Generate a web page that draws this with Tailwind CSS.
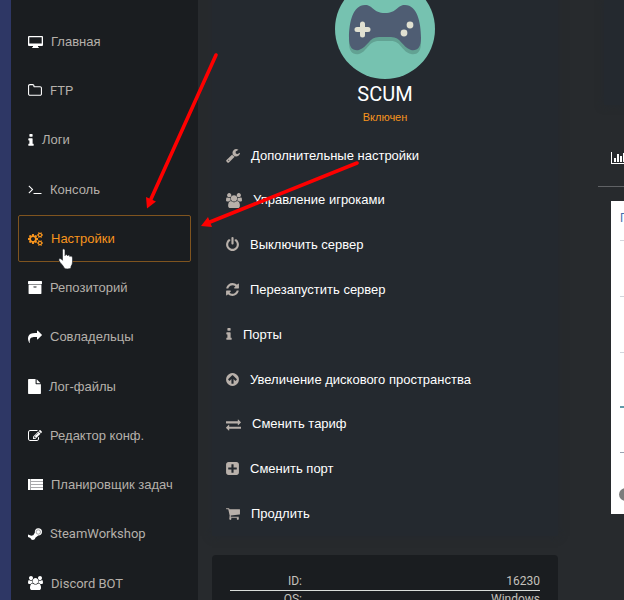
<!DOCTYPE html>
<html lang="ru">
<head>
    <meta charset="UTF-8">
    <meta name="viewport" content="width=device-width, initial-scale=1.0">
    <title>SCUM - Панель управления</title>
    <script src="https://cdn.jsdelivr.net/npm/@tailwindcss/browser@4"></script>
</head>
<body class="relative flex h-screen overflow-hidden bg-[#272a2d] font-['Liberation_Sans',Arial,sans-serif] text-[13px] text-white">

    <div class="w-[11px] shrink-0 bg-[#2e3765]"></div>

    <!-- Боковое меню -->
    <nav class="flex min-h-[608px] w-[187px] shrink-0 flex-col self-start bg-[#1a1d20] pt-[17px] pr-[7px] pl-[7px] text-[#b5b0aa]">
        <a href="#" class="my-px flex flex-1 items-center gap-2 border border-transparent pl-[9px]">
            <svg class="h-[14px] w-[15px] fill-white" viewBox="0 0 15 14"><path fill-rule="evenodd" d="M1 1h13q1 0 1 1v8q0 1-1 1h-4v1q1 0 1 1h-7q0-1 1-1v-1h-4q-1 0-1-1v-8q0-1 1-1zM1.300 2.300v6.200h12.400v-6.200z"/></svg>
            Главная
        </a>
        <a href="#" class="my-px flex flex-1 items-center gap-2 border border-transparent pl-[9px] font-['Roboto',sans-serif]">
            <svg class="h-[15px] w-[14px] fill-white" viewBox="64 0 1664 1792"><path d="M1600 1312v-704q0-40-28-68t-68-28h-704q-40 0-68-28t-28-68v-64q0-40-28-68t-68-28h-320q-40 0-68 28t-28 68v960q0 40 28 68t68 28h1216q40 0 68-28t28-68zm128-704v704q0 92-66 158t-158 66h-1216q-92 0-158-66t-66-158v-960q0-92 66-158t158-66h320q92 0 158 66t66 158v32h672q92 0 158 66t66 158z"/></svg>
            FTP
        </a>
        <a href="#" class="my-px flex flex-1 items-center gap-2 border border-transparent pl-[9px]">
            <svg class="h-[15px] w-[6px] fill-white" viewBox="576 0 640 1792"><path d="M1216 1344v128q0 26-19 45t-45 19h-512q-26 0-45-19t-19-45v-128q0-26 19-45t45-19h64v-384h-64q-26 0-45-19t-19-45v-128q0-26 19-45t45-19h384q26 0 45 19t19 45v576h64q26 0 45 19t19 45zm-128-1152v192q0 26-19 45t-45 19h-256q-26 0-45-19t-19-45v-192q0-26 19-45t45-19h256q26 0 45 19t19 45z"/></svg>
            Логи
        </a>
        <a href="#" class="my-px flex flex-1 items-center gap-2 border border-transparent pl-[9px]">
            <svg class="h-[14px] w-[14px] fill-white" viewBox="64 0 1664 1792"><path d="M649 983l-466 466q-10 10-23 10t-23-10l-50-50q-10-10-10-23t10-23l393-393-393-393q-10-10-10-23t10-23l50-50q10-10 23-10t23 10l466 466q10 10 10 23t-10 23zm1079 457v64q0 14-9 23t-23 9h-960q-14 0-23-9t-9-23v-64q0-14 9-23t23-9h960q14 0 23 9t9 23z"/></svg>
            Консоль
        </a>
        <a href="#" class="my-px flex flex-1 items-center gap-2 rounded-xs border border-[#7f541f] pl-[9px] text-[#f7941d]">
            <svg class="h-[14px] w-[15px] fill-[#f7941d]" viewBox="-64 0 1920 1792"><path d="M832 896q0-106-75-181t-181-75-181 75-75 181 75 181 181 75 181-75 75-181zm768 512q0-52-38-90t-90-38-90 38-38 90q0 53 37.500 90.500t90.500 37.500 90.500-37.500 37.500-90.500zm0-1024q0-52-38-90t-90-38-90 38-38 90q0 53 37.500 90.500t90.500 37.500 90.500-37.500 37.500-90.500zm-384 421v185q0 10-7 19.500t-16 10.500l-155 24q-11 35-32 76 34 48 90 115 7 11 7 20 0 12-7 19-23 30-82.500 89.500t-78.500 59.500q-11 0-21-7l-115-90q-37 19-77 31-11 108-23 155-7 24-30 24h-186q-11 0-20-7.500t-10-17.500l-23-153q-34-10-75-31l-118 89q-7 7-20 7-11 0-21-8-144-133-144-160 0-9 7-19 10-14 41-53t47-61q-23-44-35-82l-152-24q-10-1-17-9.500t-7-19.500v-185q0-10 7-19.500t16-10.500l155-24q11-35 32-76-34-48-90-115-7-11-7-20 0-12 7-20 22-30 82-89t79-59q11 0 21 7l115 90q34-18 77-32 11-108 23-154 7-24 30-24h186q11 0 20 7.500t10 17.500l23 153q34 10 75 31l118-89q8-7 20-7 11 0 21 8 144 133 144 160 0 8-7 19-12 16-42 54t-45 60q23 48 34 82l152 23q10 2 17 10.500t7 19.500zm640 533v140q0 16-149 31-12 27-30 52 51 113 51 138 0 4-4 7-122 71-124 71-8 0-46-47t-52-68q-20 2-30 2t-30-2q-14 21-52 68t-46 47q-2 0-124-71-4-3-4-7 0-25 51-138-18-25-30-52-149-15-149-31v-140q0-16 149-31 13-29 30-52-51-113-51-138 0-4 4-7 4-2 35-20t59-34 30-16q8 0 46 46.500t52 67.500q20-2 30-2t30 2q51-71 92-112l6-2q4 0 124 70 4 3 4 7 0 25-51 138 17 23 30 52 149 15 149 31zm0-1024v140q0 16-149 31-12 27-30 52 51 113 51 138 0 4-4 7-122 71-124 71-8 0-46-47t-52-68q-20 2-30 2t-30-2q-14 21-52 68t-46 47q-2 0-124-71-4-3-4-7 0-25 51-138-18-25-30-52-149-15-149-31v-140q0-16 149-31 13-29 30-52-51-113-51-138 0-4 4-7 4-2 35-20t59-34 30-16q8 0 46 46.500t52 67.500q20-2 30-2t30 2q51-71 92-112l6-2q4 0 124 70 4 3 4 7 0 25-51 138 17 23 30 52 149 15 149 31z"/></svg>
            Настройки
        </a>
        <a href="#" class="my-px flex flex-1 items-center gap-2 border border-transparent pl-[9px]">
            <svg class="h-[15px] w-[14px] fill-white" viewBox="64 0 1664 1792"><path d="M1088 832q0-26-19-45t-45-19h-256q-26 0-45 19t-19 45 19 45 45 19h256q26 0 45-19t19-45zm576-192v960q0 26-19 45t-45 19h-1408q-26 0-45-19t-19-45v-960q0-26 19-45t45-19h1408q26 0 45 19t19 45zm64-448v256q0 26-19 45t-45 19h-1536q-26 0-45-19t-19-45v-256q0-26 19-45t45-19h1536q26 0 45 19t19 45z"/></svg>
            Репозиторий
        </a>
        <a href="#" class="my-px flex flex-1 items-center gap-2 border border-transparent pl-[9px]">
            <svg class="h-[14px] w-[14px] fill-white" viewBox="0 0 1792 1792"><path d="M1792 640q0 26-19 45l-512 512q-19 19-45 19t-45-19-19-45v-256h-224q-98 0-175.500 6t-154 21.500-133 42.500-105.500 69.500-80 101-48.500 138.500-17.500 181q0 55 5 123 0 6 2.500 23.500t2.500 26.500q0 15-8.500 25t-23.500 10q-16 0-28-17-7-9-13-22t-13.500-30-10.500-24q-127-285-127-451 0-199 53-333 162-403 875-403h224v-256q0-26 19-45t45-19 45 19l512 512q19 19 19 45z"/></svg>
            Совладельцы
        </a>
        <a href="#" class="my-px flex flex-1 items-center gap-2 border border-transparent pl-[9px]">
            <svg class="h-[15px] w-[13px] fill-white" viewBox="128 0 1536 1792"><path d="M1152 512v-472q22 14 36 28l408 408q14 14 28 36h-472zm-128 32q0 40 28 68t68 28h544v1056q0 40-28 68t-68 28h-1344q-40 0-68-28t-28-68v-1600q0-40 28-68t68-28h800v544z"/></svg>
            Лог-файлы
        </a>
        <a href="#" class="my-px flex flex-1 items-center gap-2 border border-transparent pl-[9px]">
            <svg class="h-[14px] w-[14px] fill-white" viewBox="0 0 1792 1792"><path d="M888 1184l116-116-152-152-116 116v56h96v96h56zm440-720q-16-16-33 1l-350 350q-17 17-1 33t33-1l350-350q17-17 1-33zm80 594v190q0 119-84.500 203.500t-203.500 84.500h-832q-119 0-203.500-84.500t-84.500-203.500v-832q0-119 84.500-203.500t203.500-84.500h832q63 0 117 25 15 7 18 23 3 17-9 29l-49 49q-14 14-32 8-23-6-45-6h-832q-66 0-113 47t-47 113v832q0 66 47 113t113 47h832q66 0 113-47t47-113v-126q0-13 9-22l64-64q15-15 35-7t20 29zm-96-738l288 288-672 672h-288v-288zm444 132l-92 92-288-288 92-92q28-28 68-28t68 28l152 152q28 28 28 68t-28 68z"/></svg>
            Редактор конф.
        </a>
        <a href="#" class="my-px flex flex-1 items-center gap-2 border border-transparent pl-[9px]">
            <svg class="h-[14px] w-[15px]" viewBox="0 0 15 14"><path fill="#a9a9ac" d="M0 1h15v11h-15z"/><path fill="#fff" d="M0 1h2v11h-2zM3 1h12v2h-12zM3 4h12v2h-12zM3 7h12v2h-12zM3 10h12v2h-12z"/></svg>
            Планировщик задач
        </a>
        <a href="#" class="my-px flex flex-1 items-center gap-2 border border-transparent pl-[9px] font-['Roboto',sans-serif]">
            <svg class="h-[14px] w-[14px]" viewBox="0 0 14 14"><path fill="#fff" d="M0 7.500l3.300 1.200q1-.6 2-.5l1.500-2.400q-.2-4.300 3.500-4.500 3.700.1 3.700 3.700-.2 3.400-3.700 3.600l-2.700 2q-.5 2.300-2.600 2.400-2-.1-2.600-1.900l-2.400-1z"/><circle cx="10.300" cy="5" r="2.200" fill="none" stroke="#8b8d8f" stroke-width=".8"/></svg>
            SteamWorkshop
        </a>
        <a href="#" class="my-px flex flex-1 items-center gap-2 border border-transparent pl-[9px] font-['Roboto',sans-serif]">
            <svg class="h-[14px] w-[15px] fill-white" viewBox="-64 0 1920 1792"><path d="M529 896q-162 5-265 128h-134q-82 0-138-40.500t-56-118.500q0-353 124-353 6 0 43.500 21t97.500 42.500 119 21.500q67 0 133-23-5 37-5 66 0 139 81 256zm1071 637q0 120-73 189.500t-194 69.500h-874q-121 0-194-69.500t-73-189.500q0-53 3.500-103.500t14-109 26.500-108.500 43-97.500 62-81 85.500-53.500 111.500-20q10 0 43 21.500t73 48 107 48 135 21.500 135-21.500 107-48 73-48 43-21.500q61 0 111.500 20t85.500 53.500 62 81 43 97.500 26.500 108.500 14 109 3.500 103.500zm-1024-1277q0 106-75 181t-181 75-181-75-75-181 75-181 181-75 181 75 75 181zm704 384q0 159-112.500 271.500t-271.500 112.500-271.500-112.500-112.500-271.500 112.500-271.500 271.500-112.500 271.500 112.500 112.500 271.500zm576 225q0 78-56 118.500t-138 40.500h-134q-103-123-265-128 81-117 81-256 0-29-5-66 66 23 133 23 59 0 119-21.500t97.500-42.500 43.500-21q124 0 124 353zm-128-609q0 106-75 181t-181 75-181-75-75-181 75-181 181-75 181 75 75 181z"/></svg>
            Discord BOT
        </a>
    </nav>

    <main class="flex min-w-0 flex-1 items-start gap-10 pl-[14px]">
        <!-- Сервер -->
        <div class="w-[346px] shrink-0">
            <section class="bg-[#24292f] px-[14px] shadow-[0_0_8px_#24292f]">
                <svg class="mx-auto -mt-[21px] h-[100px] w-[100px]" viewBox="0 0 100 100">
                    <circle cx="50" cy="50" r="50" fill="#76c2b0"/>
                    <path fill="#62a293" d="M14 64C14 48 18 30 28 30C37 30 36 39 49 39C63 39 61 30 71 30C81 30 86 48 86 64C86 74 81 76 76 75C67 73 66 62 56 62H44C33 62 32 73 24 75C18 76 14 73 14 64Z"/>
                    <path fill="#4f5d73" d="M14 59C14 43 18 26 30 26C38 26 38 34 50 34C62 34 62 26 70 26C82 26 86 43 86 59C86 69 82 72 76 71C67 68 66 58 56 58H44C34 58 33 68 24 71C18 72 14 69 14 59Z"/>
                    <path stroke="#e0e0d1" stroke-width="5" stroke-linecap="round" d="M22 50.500h11M27.500 45v11"/>
                    <circle cx="75" cy="46" r="3.400" fill="#e0e0d1"/>
                    <circle cx="69" cy="54" r="3.400" fill="#e0e0d1"/>
                </svg>
                <h1 class="mt-[3px] text-center font-['Roboto',sans-serif] text-xl leading-6">SCUM</h1>
                <p class="mt-[3px] text-center text-[11px] leading-4 text-[#f7941d]">Включен</p>
                <ul class="mt-2 grid h-[403px] auto-rows-fr">
                    <li class="flex"><a href="#" class="flex items-center gap-[11px]">
                        <svg class="h-[15px] w-[14px] fill-[#b8b0aa]" viewBox="64 0 1664 1792"><path d="M448 1472q0-26-19-45t-45-19-45 19-19 45 19 45 45 19 45-19 19-45zm644-420l-682 682q-37 37-90 37-52 0-91-37l-106-108q-38-36-38-90 0-53 38-91l681-681q39 98 114.500 173.500t173.500 114.500zm634-435q0 39-23 106-47 134-164.500 217.500t-258.500 83.500q-185 0-316.500-131.500t-131.500-316.500 131.500-316.500 316.500-131.500q58 0 121.500 16.500t107.500 46.500q16 11 16 28t-16 28l-293 169v224l193 107q5-3 79-48.500t135.500-81 70.500-35.500q15 0 23.500 10t8.500 25z"/></svg>
                        Дополнительные настройки
                    </a></li>
                    <li class="flex"><a href="#" class="flex items-center gap-[11px]">
                        <svg class="h-[15px] w-[16px] fill-[#b8b0aa]" viewBox="-64 0 1920 1792"><path d="M529 896q-162 5-265 128h-134q-82 0-138-40.500t-56-118.500q0-353 124-353 6 0 43.500 21t97.500 42.500 119 21.500q67 0 133-23-5 37-5 66 0 139 81 256zm1071 637q0 120-73 189.500t-194 69.500h-874q-121 0-194-69.500t-73-189.500q0-53 3.500-103.500t14-109 26.500-108.500 43-97.500 62-81 85.500-53.500 111.500-20q10 0 43 21.500t73 48 107 48 135 21.500 135-21.500 107-48 73-48 43-21.500q61 0 111.500 20t85.500 53.500 62 81 43 97.500 26.500 108.500 14 109 3.500 103.500zm-1024-1277q0 106-75 181t-181 75-181-75-75-181 75-181 181-75 181 75 75 181zm704 384q0 159-112.500 271.500t-271.500 112.500-271.500-112.500-112.500-271.500 112.500-271.500 271.500-112.500 271.500 112.500 112.500 271.500zm576 225q0 78-56 118.500t-138 40.500h-134q-103-123-265-128 81-117 81-256 0-29-5-66 66 23 133 23 59 0 119-21.500t97.500-42.500 43.500-21q124 0 124 353zm-128-609q0 106-75 181t-181 75-181-75-75-181 75-181 181-75 181 75 75 181z"/></svg>
                        Управление игроками
                    </a></li>
                    <li class="flex"><a href="#" class="flex items-center gap-[11px]">
                        <svg class="h-[15px] w-[13px] fill-[#b8b0aa]" viewBox="128 0 1536 1792"><path d="M1664 896q0 156-61 298t-164 245-245 164-298 61-298-61-245-164-164-245-61-298q0-182 80.500-343t226.500-270q43-32 95.500-25t83.500 50q32 42 24.500 94.500t-49.500 84.500q-98 74-151.500 181t-53.500 228q0 104 40.500 198.500t109.500 163.500 163.500 109.500 198.500 40.500 198.500-40.500 163.500-109.500 109.500-163.500 40.500-198.500q0-121-53.500-228t-151.500-181q-42-32-49.500-84.500t24.500-94.500q31-43 84-50t95 25q146 109 226.500 270t80.500 343zm-640-768v640q0 52-38 90t-90 38-90-38-38-90v-640q0-52 38-90t90-38 90 38 38 90z"/></svg>
                        Выключить сервер
                    </a></li>
                    <li class="flex"><a href="#" class="flex items-center gap-[11px]">
                        <svg class="h-[15px] w-[13px] fill-[#b8b0aa]" viewBox="128 0 1536 1792"><path d="M1639 1056q0 5-1 7-64 268-268 434.500t-478 166.500q-146 0-282.500-55t-243.500-157l-129 129q-19 19-45 19t-45-19-19-45v-448q0-26 19-45t45-19h448q26 0 45 19t19 45-19 45l-137 137q71 66 161 102t187 36q134 0 250-65t186-179q11-17 53-117 8-23 30-23h192q13 0 22.500 9.500t9.500 22.500zm25-800v448q0 26-19 45t-45 19h-448q-26 0-45-19t-19-45 19-45l138-138q-148-137-349-137-134 0-250 65t-186 179q-11 17-53 117-8 23-30 23h-199q-13 0-22.500-9.500t-9.500-22.500v-7q65-268 270-434.500t480-166.500q146 0 284 55.500t245 156.500l130-129q19-19 45-19t45 19 19 45z"/></svg>
                        Перезапустить сервер
                    </a></li>
                    <li class="flex"><a href="#" class="flex items-center gap-[11px]">
                        <svg class="h-[15px] w-[6px] fill-[#b8b0aa]" viewBox="576 0 640 1792"><path d="M1216 1344v128q0 26-19 45t-45 19h-512q-26 0-45-19t-19-45v-128q0-26 19-45t45-19h64v-384h-64q-26 0-45-19t-19-45v-128q0-26 19-45t45-19h384q26 0 45 19t19 45v576h64q26 0 45 19t19 45zm-128-1152v192q0 26-19 45t-45 19h-256q-26 0-45-19t-19-45v-192q0-26 19-45t45-19h256q26 0 45 19t19 45z"/></svg>
                        Порты
                    </a></li>
                    <li class="flex"><a href="#" class="flex items-center gap-[11px]">
                        <svg class="h-[15px] w-[13px] fill-[#b8b0aa]" viewBox="128 0 1536 1792"><path d="M1412 895q0-27-18-45l-362-362-91-91q-18-18-45-18t-45 18l-91 91-362 362q-18 18-18 45t18 45l91 91q18 18 45 18t45-18l189-189v502q0 26 19 45t45 19h128q26 0 45-19t19-45v-502l189 189q19 19 45 19t45-19l91-91q18-18 18-45zm252 1q0 209-103 385.500t-279.500 279.500-385.500 103-385.500-103-279.500-279.500-103-385.500 103-385.500 279.500-279.500 385.500-103 385.500 103 279.500 279.500 103 385.500z"/></svg>
                        Увеличение дискового пространства
                    </a></li>
                    <li class="flex"><a href="#" class="flex items-center gap-[11px]">
                        <svg class="h-[15px] w-[15px] fill-[#b8b0aa]" viewBox="0 0 1792 1792"><path d="M1792 1184v192q0 13-9.500 22.500t-22.500 9.500h-1376v192q0 13-9.500 22.500t-22.500 9.500q-12 0-24-10l-319-320q-9-9-9-22 0-14 9-23l320-320q9-9 23-9 13 0 22.500 9.500t9.500 22.500v192h1376q13 0 22.500 9.500t9.500 22.500zm0-544q0 14-9 23l-320 320q-9 9-23 9-13 0-22.500-9.500t-9.500-22.500v-192h-1376q-13 0-22.500-9.500t-9.500-22.500v-192q0-13 9.500-22.500t22.500-9.500h1376v-192q0-14 9-23t23-9q12 0 24 10l319 319q9 9 9 23z"/></svg>
                        Сменить тариф
                    </a></li>
                    <li class="flex"><a href="#" class="flex items-center gap-[11px]">
                        <svg class="h-[15px] w-[13px] fill-[#b8b0aa]" viewBox="128 0 1536 1792"><path d="M1408 960v-128q0-26-19-45t-45-19h-320v-320q0-26-19-45t-45-19h-128q-26 0-45 19t-19 45v320h-320q-26 0-45 19t-19 45v128q0 26 19 45t45 19h320v320q0 26 19 45t45 19h128q26 0 45-19t19-45v-320h320q26 0 45-19t19-45zm256-544v960q0 119-84.500 203.500t-203.500 84.500h-960q-119 0-203.500-84.500t-84.500-203.500v-960q0-119 84.500-203.500t203.500-84.500h960q119 0 203.500 84.500t84.500 203.500z"/></svg>
                        Сменить порт
                    </a></li>
                    <li class="flex"><a href="#" class="flex items-center gap-[11px]">
                        <svg class="h-[15px] w-[14px] fill-[#b8b0aa]" viewBox="64 0 1664 1792"><path d="M704 1536q0 52-38 90t-90 38-90-38-38-90 38-90 90-38 90 38 38 90zm896 0q0 52-38 90t-90 38-90-38-38-90 38-90 90-38 90 38 38 90zm128-1088v512q0 24-16.500 42.500t-40.500 21.500l-1044 122q13 60 13 70 0 16-24 64h920q26 0 45 19t19 45-19 45-45 19h-1024q-26 0-45-19t-19-45q0-11 8-31.500t16-36 21.500-40 15.500-29.500l-177-823h-204q-26 0-45-19t-19-45 19-45 45-19h256q16 0 28.500 6.500t19.500 15.500 13 24.500 8 26 5.500 29.500 4.500 26h1201q26 0 45 19t19 45z"/></svg>
                        Продлить
                    </a></li>
                </ul>
            </section>

            <section class="mt-[19px] rounded-sm bg-[#1a1d20] px-[18px] pt-[18px] pb-4 font-['Roboto',sans-serif] text-xs text-[#c4c1bc]">
                <table class="w-full leading-[17px]">
                    <tbody>
                        <tr class="border-b border-[#d8dcd8]">
                            <th scope="row" class="w-[72px] text-right font-normal">ID:</th>
                            <td class="text-right">16230</td>
                        </tr>
                        <tr>
                            <th scope="row" class="text-right font-normal">OS:</th>
                            <td class="text-right">Windows</td>
                        </tr>
                    </tbody>
                </table>
            </section>
        </div>

        <!-- Статистика -->
        <div class="min-w-0 flex-1">
            <div class="ml-[6px] h-[105px] bg-[#24292f] shadow-[0_0_8px_#24292f]"></div>
            <section class="mt-6">
                <div class="flex h-[58px] items-center overflow-hidden border-b border-[#606265] pl-[13px]">
                    <svg class="h-[14px] w-[16px] shrink-0 fill-white" viewBox="0 0 16 14"><path d="M0 1h1v11h15v1h-16zM3 7h2v4h-2zM6 3h2v8h-2zM9 5h2v6h-2zM12 2h2v9h-2z"/></svg>
                </div>
                <div class="mt-[14px] ml-[13px] h-[313px] overflow-hidden bg-white pl-[9px]">
                    <div class="h-10 border-b border-gray-300 pt-[9px] text-xs text-[#3f6fae]">П</div>
                    <div class="h-[56px] border-b border-gray-300"></div>
                    <div class="h-[56px] border-b border-gray-300"></div>
                    <div class="h-[55px] border-b-2 border-[#6199a8]"></div>
                    <div class="h-[45px] border-b border-gray-400"></div>
                    <div class="mt-[35px] -ml-px h-[13px] w-[13px] rounded-full bg-[#7c7c7c]"></div>
                </div>
            </section>
        </div>
    </main>

    <!-- Стрелки и курсор поверх страницы -->
    <svg class="pointer-events-none absolute top-0 left-0 h-[300px] w-[400px]" viewBox="0 0 400 300">
        <g stroke="#fe0000" stroke-width="3.600" stroke-linecap="round">
            <path d="M216 55L151 199"/>
            <path d="M357 163L210 222"/>
        </g>
        <path fill="#fe0000" d="M147 208.500L146 197L156 201.500ZM201 226L208 217L212 227Z"/>
        <path fill="#fff" stroke="#1a1d20" stroke-width=".6" d="M62.500 250.500q0-1.700 1.200-1.700t1.300 1.700v5.200q.3-1.400 1.300-1.300t1.200 1.500q.5-1 1.300-.8t1.100 1.500q.5-.8 1.200-.6 1.200.2 1.400 2v4q0 2.500-1.500 4.500v1.500q-1.500 1-3.800 1t-3.200-1.200q-.6-1.800-2.300-3.500t-2.700-3.800q-.5-1.800.8-2t2.700 1.800z"/>
    </svg>
</body>
</html>
